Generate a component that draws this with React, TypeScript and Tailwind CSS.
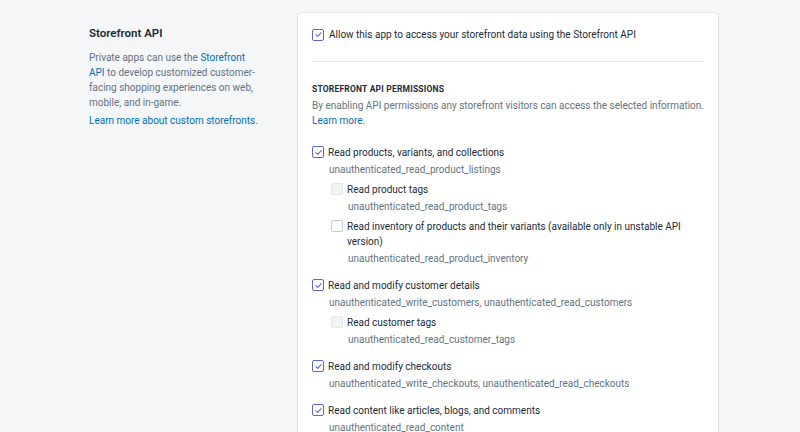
import React from 'react'

type Perm = {
    label: string
    scope: string
    checked: boolean
    nested?: boolean
    muted?: boolean
}

const perms: Perm[] = [
    { label: 'Read products, variants, and collections', scope: 'unauthenticated_read_product_listings', checked: true },
    { label: 'Read product tags', scope: 'unauthenticated_read_product_tags', checked: false, nested: true, muted: true },
    {
        label: 'Read inventory of products and their variants (available only in unstable API version)',
        scope: 'unauthenticated_read_product_inventory',
        checked: false,
        nested: true,
    },
    { label: 'Read and modify customer details', scope: 'unauthenticated_write_customers, unauthenticated_read_customers', checked: true },
    { label: 'Read customer tags', scope: 'unauthenticated_read_customer_tags', checked: false, nested: true, muted: true },
    { label: 'Read and modify checkouts', scope: 'unauthenticated_write_checkouts, unauthenticated_read_checkouts', checked: true },
    { label: 'Read content like articles, blogs, and comments', scope: 'unauthenticated_read_content', checked: true },
]

function Checkbox({ checked, muted }: { checked: boolean; muted?: boolean }) {
    if (checked) {
        return (
            <span className="flex h-[12px] w-[12px] shrink-0 items-center justify-center rounded-[2px] border border-[#5c6ac4] bg-white">
                <svg viewBox="0 0 12 12" className="h-[9px] w-[9px]">
                    <path d="M2.5 6.2 L5 8.5 L9.5 3.5" fill="none" stroke="#5c6ac4" strokeWidth="1.4" strokeLinecap="round" strokeLinejoin="round" />
                </svg>
            </span>
        )
    }
    return (
        <span
            className={`block h-[12px] w-[12px] shrink-0 rounded-[2px] border ${
                muted ? 'border-[#e3e6ea] bg-[#f1f3f5]' : 'border-[#c4cdd5] bg-white'
            }`}
        />
    )
}

export default function App() {
    return (
        <div className="min-h-[432px] w-full bg-[#f4f6f8] font-['Roboto',sans-serif] text-[10px] leading-[15px] text-[#212b36]">
            <div className="mx-auto flex w-[638px] pl-[8px] pt-[13px]">
                {/* Description column */}
                <div className="w-[209px] shrink-0 pr-[40px] pt-[12px]">
                    <h2 className="text-[11.5px] font-semibold leading-[16px] text-[#212b36]">Storefront API</h2>
                    <p className="mt-[9px] text-[#637381]">
                        Private apps can use the <span className="text-[#006fbb]">Storefront API</span> to develop customized customer-facing shopping experiences on web, mobile, and in-game.
                    </p>
                    <p className="mt-[3px] text-[#006fbb]">Learn more about custom storefronts.</p>
                </div>

                {/* Settings card */}
                <div className="w-[420px] rounded-[3px] bg-white px-[14px] pt-[13px] shadow-[0_0_0_1px_rgba(63,63,68,0.05),0_1px_3px_0_rgba(63,63,68,0.15)]">
                    <div className="flex items-center gap-[5px] pt-[1px]">
                        <Checkbox checked />
                        <span>Allow this app to access your storefront data using the Storefront API</span>
                    </div>

                    <div className="mt-[19px] border-t border-[#dfe3e8]" />

                    <div className="pt-[21px]">
                        <h3 className="text-[8.5px] font-bold uppercase leading-[12px] tracking-[0.2px]">Storefront API permissions</h3>
                        <p className="mt-[3px] text-[#637381]">
                            By enabling API permissions any storefront visitors can access the selected information.{' '}
                            <span className="text-[#006fbb]">Learn more.</span>
                        </p>
                    </div>

                    <div className="mt-[17px] flex flex-col">
                        {perms.map((p, i) => {
                            const next = perms[i + 1]
                            const gap = !next ? 0 : next.nested ? 5 : 12
                            return (
                                <div key={p.scope} className={p.nested ? 'pl-[19px]' : ''} style={{ marginBottom: gap }}>
                                    <div className="flex items-start gap-[4px]">
                                        <span className="pt-[1px]">
                                            <Checkbox checked={p.checked} muted={p.muted} />
                                        </span>
                                        <span className="flex-1">{p.label}</span>
                                    </div>
                                    <div className="mt-[2px] pl-[17px] text-[#637381]">{p.scope}</div>
                                </div>
                            )
                        })}
                    </div>
                </div>
            </div>
        </div>
    )
}
